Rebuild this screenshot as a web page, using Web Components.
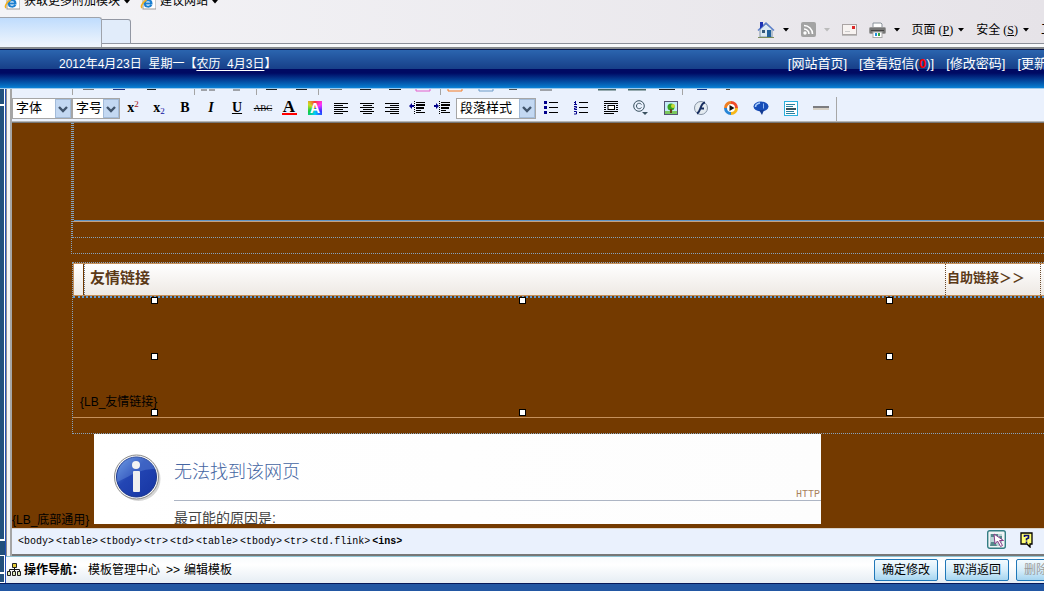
<!DOCTYPE html>
<html lang="zh-CN">
<head>
<meta charset="utf-8">
<title>编辑模板</title>
<style>
  html, body { height: 100%; margin: 0; }
  body { font: 12px/16px "Liberation Sans", "Noto Sans CJK SC", sans-serif; color: #000; overflow: hidden; }
</style>
</head>
<body>
<template-editor-page></template-editor-page>
<script>
const define = (name, html, setup) => customElements.define(name, class extends HTMLElement {
  constructor() {
    super();
    this.attachShadow({ mode: 'open' }).innerHTML =
      '<style>*{box-sizing:border-box}button{font:inherit;color:inherit;cursor:pointer}a{color:inherit;text-decoration:none}</style>' + html;
  }
  connectedCallback() { if (setup) setup(this, this.shadowRoot); }
});

const bars = (rows) => rows.map(([x, y, w]) => `<rect x="${x}" y="${y}" width="${w}" height="1"/>`).join('');
const ICONS = {
  ie: [16, 16, `<rect x="3" y="0" width="13" height="15" fill="#fff" stroke="#999"/><path d="M5 10.500c0 2.500 5 3 6.500.5M4.500 9.500h7c0-4.500-7-4.500-7 0z" fill="none" stroke="#1a7fd0" stroke-width="2"/><path d="M2 14C-1 11 8 3 13 3" fill="none" stroke="#f5b21c" stroke-width="1.500"/>`],
  home: [18, 18, `<path d="M3 8v8h12V8L9 3z" fill="#dde9f2" stroke="#7e94aa"/><path d="M1 9.500L9 2l8 7.500" fill="none" stroke="#5c7fca" stroke-width="1.500"/><path d="M3 1h3v4l-3 3z" fill="#1d32b4"/><rect x="10" y="9" width="4" height="7" fill="#21619c"/><rect x="5" y="9" width="3" height="3" fill="#345a7c"/><path d="M1 16.500h16" stroke="#7b8c5a"/>`],
  rss: [15, 15, `<rect width="15" height="15" rx="2" fill="#a3a3a3"/><circle cx="4" cy="11" r="1.700" fill="#fff"/><path d="M3 7a5 5 0 0 1 5 5M3 3.500A8.500 8.500 0 0 1 11.500 12" fill="none" stroke="#fff" stroke-width="1.600"/>`],
  mail: [15, 12, `<rect x=".5" y=".5" width="14" height="10" fill="#f7f3f1" stroke="#aaa4a4"/><rect x="10" y="2" width="3" height="3" fill="#dc2828"/><path d="M3 7.500h5" stroke="#ccc"/><path d="M0 11.500h15" stroke="#bbb"/>`],
  print: [17, 16, `<path d="M4 6V1h8l1 1v4" fill="#fff" stroke="#8a929a"/><rect x=".5" y="5.500" width="16" height="6" rx="1" fill="#777" stroke="#999"/><path d="M2 8.500h13" stroke="#444"/><rect x="4" y="10" width="9" height="5.500" fill="#fff" stroke="#aaa"/><rect x="6" y="11" width="2" height="3" fill="#1d8edb"/><rect x="9" y="11" width="2" height="3" fill="#36a641"/>`],
  left: [15, 13, `<g>${bars([[0,1,14],[0,3,9],[0,5,14],[0,7,9],[0,9,14],[0,11,9]])}</g>`],
  center: [15, 13, `<g>${bars([[0,1,14],[3,3,9],[0,5,14],[3,7,9],[0,9,14],[3,11,9]])}</g>`],
  right: [15, 13, `<g>${bars([[0,1,14],[5,3,9],[0,5,14],[5,7,9],[0,9,14],[5,11,9]])}</g>`],
  outdent: [17, 14, `<g>${bars([[7,1,9],[7,3,9],[7,4,9],[7,6,8],[7,7,8],[7,9,5],[7,11,9]])}</g><path d="M5.500 0v14" stroke="#000" stroke-dasharray="1 1"/><path d="M0 5l3-3v2h2v2H3v2z" fill="#00008b"/>`],
  indent: [17, 14, `<g>${bars([[7,1,9],[7,3,9],[7,4,9],[7,6,8],[7,7,8],[7,9,5],[7,11,9]])}</g><path d="M5.500 0v14" stroke="#000" stroke-dasharray="1 1"/><path d="M5 5L2 2v2H0v2h2v2z" fill="#00008b"/>`],
  ul: [16, 14, `<path d="M1 0h3v3H1zM1 5h3v3H1zM1 10h3v3H1z" fill="#00008b"/><path d="M6 1.500h9M6 6.500h9M6 11.500h9" stroke="#000"/>`],
  ol: [16, 14, `<path d="M1 1.500h1.500M2.500 0v4M1 3.500h3M1 5.500h2.500v1.500H1.500v1.500H4M1 10.500h2.500V13H1" fill="none" stroke="#00008b"/><path d="M6 1.500h9M6 6.500h9M6 11.500h9" stroke="#000"/>`],
  block: [16, 14, `<path d="M1 .5h14M1 2.500h14M1 4.500h2M1 6.500h2M1 8.500h2M13 4.500h2M13 6.500h2M13 8.500h2M1 10.500h14M1 12.500h10" stroke="#000"/><rect x="5" y="4.500" width="6.500" height="4" fill="#fff" stroke="#000"/>`],
  copy: [18, 16, `<circle cx="7" cy="6" r="5.300" fill="none" stroke="#3a5260"/><path d="M9.500 4.500C8 2.500 4.500 3 4.500 6s3.500 3.500 5 1.500" fill="none" stroke="#3a5260"/><path d="M10 12h6l-3 3z" fill="#3a5260"/>`],
  image: [16, 16, `<rect x="1.500" y="1.500" width="13" height="13" fill="#c4ecf8" stroke="#557"/><path d="M2 11h12v3H2z" fill="#7ac85f"/><circle cx="8" cy="7" r="3.500" fill="#38a320"/><circle cx="10" cy="6" r="2" fill="#c7da39"/><path d="M8 9v4" stroke="#69401c" stroke-width="2"/>`],
  flash: [16, 16, `<circle cx="8" cy="8" r="6.500" fill="#e4ebf1" stroke="#8593a4"/><path d="M12 2.500C7 3 8 12 4 13.500M6.500 8.500H11" fill="none" stroke="#182e60" stroke-width="2"/>`],
  media: [16, 16, `<circle cx="8" cy="8" r="5.500" fill="#fff"/><path d="M8 2.500A5.500 5.500 0 0 1 13.500 8" stroke="#f04a28" fill="none" stroke-width="3"/><path d="M13.500 8A5.500 5.500 0 0 1 8 13.500" stroke="#f7b718" fill="none" stroke-width="3"/><path d="M8 13.500A5.500 5.500 0 0 1 2.500 8" stroke="#2685d7" fill="none" stroke-width="3"/><path d="M2.500 8A5.500 5.500 0 0 1 8 2.500" stroke="#ee7e22" fill="none" stroke-width="3"/><path d="M6.500 5l5 3-5 3z" fill="#111"/>`],
  talk: [18, 16, `<ellipse cx="9" cy="6.500" rx="7.500" ry="5" fill="#174db8"/><path d="M7 10h5l-2 5z" fill="#123a92"/><path d="M3.500 7C3.500 4 6 3.500 8 3" stroke="#a9cdfb" stroke-width="1.600" fill="none"/><path d="M11.500 3.500v5" stroke="#8db6f3"/>`],
  page: [14, 15, `<rect x=".5" y=".5" width="13" height="14" fill="#fff" stroke="#2bb0de"/><path d="M2 3.500h9M2 5.500h7M2 10.500h8M2 12.500h9" stroke="#2b7f9d"/><path d="M2 8h10" stroke="#39525b" stroke-width="2"/>`],
  hr: [16, 14, `<rect y="5" width="16" height="2" fill="#7c7c80"/><rect y="7" width="16" height="2" fill="#d6d0c6"/>`],
  inspect: [19, 19, `<rect x=".7" y=".7" width="17.600" height="17.600" rx="2" fill="#f1f4f5" stroke="#347e84" stroke-width="1.400"/><path d="M3 4h12v12H3z" fill="#bad4d5"/><path d="M4 4h7v3H4zM4 12h4l2 4H3zM12 6h3v6z" fill="#55898b"/><path d="M7 4l1 10 2.500-3 3 5.500 2-1-3-5h4z" fill="#fff" stroke="#8a3c89"/>`],
  help: [14, 16, `<path d="M1 1h11v11h-2v3l-3-3H1z" fill="#ffff75" stroke="#000" stroke-width="1.300"/><path d="M4.500 5V3.500h4V6L6.500 7v1.500M6.500 9.500v1.500" fill="none" stroke="#0a0a78" stroke-width="1.600"/>`],
  sitemap: [15, 14, `<path d="M7.500 4v4M2.500 9V6.500h10V9" fill="none" stroke="#111"/><path d="M5.500.5h4v4h-4z" fill="#e3ca36" stroke="#222"/><path d="M.5 8.500h3v4h-3zM5.500 8.500h3v4h-3zM10.500 8.500h3v4h-3z" fill="#dce6b8" stroke="#222"/>`],
  info: [50, 52, `<defs><linearGradient id="g" x1="0" y1="0" x2="1" y2="1"><stop offset="0" stop-color="#6a98e2"/><stop offset=".4" stop-color="#2346b4"/><stop offset="1" stop-color="#1634a2"/></linearGradient></defs><circle cx="24.500" cy="25" r="22" fill="#777" opacity=".3"/><circle cx="22.500" cy="23" r="22" fill="#f6f6f6" stroke="#8a8a8a"/><circle cx="22.500" cy="23" r="20" fill="url(#g)" stroke="#1b378f"/><path d="M3 28C14 24 22 15 42 15a22 20 0 0 0-20-12C8 3 2 16 3 28z" fill="#7fa8ea" opacity=".3"/><circle cx="22" cy="11" r="4" fill="#f3f3f3"/><rect x="19" y="17" width="7" height="21" rx="1" fill="#efefef"/>`],
  chevron: [16, 19, `<rect x="0" y="0" width="16" height="19" rx="1" fill="#c3d8f2"/><rect x=".5" y=".5" width="15" height="18" fill="none" stroke="#a3bbd9"/><path d="M4 8l4 4 4-4" fill="none" stroke="#41546c" stroke-width="2.400"/>`],
  down: [6, 4, `<path d="M0 0h6L3 3.500z"/>`],
  cropped: [800, 6, `<path d="M60.500 0v6M182.500 0v6M244.500 0v6M306.500 0v6M428.500 0v6M670.500 0v6" stroke="#a4a4a4"/><g fill="none" stroke-width="1"><path d="M71 .5h11M318 .5h12" stroke="#777"/><path d="M101 .5h12" stroke="#223180"/><path d="M135 .5h9M254 .5h11M284 .5h11M348 .5h11M377 .5h12M647 .5h16" stroke="#222"/><path d="M189 1h6M197 1h6M221 1h7M497 .5h8M528 1h12" stroke="#555"/><path d="M404 0v2h14V0" stroke="#e45ecb"/><path d="M436 0v2h14V0" stroke="#f47b25"/><path d="M467 0v2h14V0" stroke="#6c9bc8"/><path d="M586 .5h18M616 .5h18" stroke="#466" stroke-width="2"/><path d="M685 .5h10" stroke="#113085"/><path d="M714 .5h4" stroke="#543"/></g>`]
};
define('ui-icon', `<style>:host{display:inline-block;flex:none;line-height:0}svg{display:block}</style><span></span>`, (el, root) => {
  const [w, h, body] = ICONS[el.getAttribute('name')];
  root.querySelector('span').innerHTML = `<svg width="${w}" height="${h}" viewBox="0 0 ${w} ${h}" aria-hidden="true">${body}</svg>`;
});

define('browser-bar', `<style>
  :host{display:block;height:49px;overflow:hidden;border-bottom:2px solid #85898c;background:linear-gradient(90deg,#f4f4f7,#e6e3e8)}
  .fav{display:flex;height:17px;padding-left:4px;gap:4px;overflow:hidden}
  .fav a{display:flex;gap:4px;margin-right:6px;align-items:flex-start;height:17px;white-space:nowrap;margin-top:-7px}
  .fav a ui-icon{margin-top:1px}.fav a .arrow{margin:7px 0 0}
  .row{display:flex;height:27px;border-bottom:1px solid #8b8f98}
  .tab{width:102px;border:1px solid #9fa3ab;border-left:0;border-bottom:0;border-radius:0 3px 0 0;background:linear-gradient(#bfdcfd,#f1f6fc);height:30px;padding:0}
  .new{width:29px;margin-top:2px;border:1px solid #9297a3;border-left:0;border-radius:0 3px 0 0;background:#e1ecfa;height:25px;padding:0}
  nav{display:flex;margin:0 -9px 0 auto;align-items:center;height:25px;white-space:nowrap}
  nav button{display:flex;align-items:center;background:none;border:0;padding:0;gap:8px;margin-right:12px}
  nav .text{gap:5px}nav .last{margin:0}.off{fill:#bbb}
  .m{font-family:"Liberation Serif","Noto Sans CJK SC",serif}
  .base{height:3px;background:#f7f9fb}
  </style>
  <div class="fav"><a href="#"><ui-icon name="ie"></ui-icon><span>获取更多附加模块</span><ui-icon class="arrow" name="down"></ui-icon></a><a href="#"><ui-icon name="ie"></ui-icon><span>建议网站</span><ui-icon class="arrow" name="down"></ui-icon></a></div>
  <div class="row"><button class="tab" aria-label="当前标签"></button><button class="new" aria-label="新标签"></button>
  <nav>
    <button aria-label="主页"><ui-icon name="home"></ui-icon><ui-icon name="down"></ui-icon></button>
    <button class="off" aria-label="源"><ui-icon name="rss"></ui-icon><ui-icon name="down"></ui-icon></button>
    <button aria-label="邮件"><ui-icon name="mail"></ui-icon></button>
    <button aria-label="打印"><ui-icon name="print"></ui-icon><ui-icon name="down"></ui-icon></button>
    <button class="text"><span>页面<span class="m"> (<u>P</u>)</span></span><ui-icon name="down"></ui-icon></button>
    <button class="text"><span>安全<span class="m"> (<u>S</u>)</span></span><ui-icon name="down"></ui-icon></button>
    <button class="last">工</button>
  </nav></div><div class="base"></div>`);

define('site-banner', `<style>
  :host{display:flex;justify-content:space-between;height:40px;color:#fff;white-space:nowrap;overflow:hidden;padding:6px 0 0 59px;border-top:1px solid #06154b;border-bottom:1px solid #9cc9ea;background:linear-gradient(#2b65af 0,#173f88 19px,#000a63 19px,#000a63 23px,#0570c4 36px,#0b82d8 38px)}
  u{text-underline-offset:2px}
  nav{display:flex;gap:12px;font-size:13px;margin-right:-3px}b{color:#f00}
  </style><div>2012年4月23日&nbsp; 星期一【<u>农历&nbsp; 4月3日</u>】</div>
  <nav><a href="#">[网站首页]</a><a href="#">[查看短信(<b>0</b>)]</a><a href="#">[修改密码]</a><a href="#">[更新</a></nav>`);

define('side-strip', `<style>
  :host{display:flex;flex-direction:column;width:6px;background:#fff;border-right:1px solid #2450b8;gap:1px}
  i{display:block;background:#22507c;border:solid #fff;border-width:0 1px 1px 0}
  .a{height:16px}.b{flex:1}.c{height:14px;border-color:#22507c}.d{height:17px}.e{height:9px}
  </style><i class="a"></i><i class="b"></i><i class="c"></i><i class="d"></i><i class="e"></i>`);

define('tool-select', `<style>
  :host{display:grid;height:21px;border:1px solid #a6a6a6;background:#fff;font-size:13px}
  select{grid-area:1/1;appearance:none;border:0;background:none;font:inherit;color:#000;padding:0 16px 0 3px;width:100%;outline:0;height:19px}
  ui-icon{grid-area:1/1;justify-self:end;pointer-events:none}
  </style><select><option></option></select><ui-icon name="chevron"></ui-icon>`, (el, root) => {
  root.querySelector('option').textContent = el.getAttribute('value');
  root.querySelector('select').setAttribute('aria-label', el.getAttribute('value'));
});

define('tool-button', `<style>
  :host{display:block;width:26px}:host([wide]){width:30px}:host([tight]){width:25px}
  button{display:flex;align-items:center;justify-content:center;width:100%;height:22px;border:0;background:none;padding:0;font:bold 14px/16px "Liberation Serif",serif}
  </style><button><slot></slot></button>`, (el, root) => {
  root.querySelector('button').setAttribute('aria-label', el.getAttribute('label'));
});

define('editor-toolbar', `<style>
  :host{display:block;flex:none;background:#eaf1fd;height:34px;overflow:hidden;border-bottom:1px solid #777;box-shadow:inset 0 -1px #b5b5b5}
  .tools{display:flex;align-items:center;height:26px;white-space:nowrap}
  ui-icon{display:block}
  .x{align-self:flex-end;font-size:9px;line-height:10px;font-weight:400}
  .red{color:#9c1010;padding-bottom:10px}.blue{color:#1010a0;padding-bottom:3px}
  .abc{font-size:9px;font-weight:400;text-decoration:line-through}
  .fg{border-bottom:2px solid #f00;line-height:12px;width:15px;text-align:center;font-size:17px}
  .bg{width:14px;height:14px;line-height:14px;color:#fff;background:conic-gradient(#f33,#f3f,#33f,#0cf,#1c4,#cd2,#f33);font-family:"Liberation Sans",sans-serif}
  .sep{width:1px;height:24px;background:#a7a7a7;align-self:flex-end}
  </style><ui-icon name="cropped"></ui-icon>
  <div class="tools"><tool-select value="字体" style="width:60px"></tool-select><tool-select value="字号" style="width:48px"></tool-select>
  <tool-button label="上标">x<span class="x red">2</span></tool-button><tool-button label="下标">x<span class="x blue">2</span></tool-button>
  <tool-button label="粗体">B</tool-button><tool-button label="斜体"><i>I</i></tool-button><tool-button label="下划线"><u>U</u></tool-button><tool-button label="删除线"><span class="abc">ABC</span></tool-button>
  <tool-button label="文字颜色"><span class="fg">A</span></tool-button><tool-button label="背景颜色"><span class="bg">A</span></tool-button>
  <tool-button label="左对齐"><ui-icon name="left"></ui-icon></tool-button><tool-button label="居中"><ui-icon name="center"></ui-icon></tool-button>
  <tool-button tight label="右对齐"><ui-icon name="right"></ui-icon></tool-button><tool-button tight label="减少缩进"><ui-icon name="outdent"></ui-icon></tool-button><tool-button tight label="增加缩进"><ui-icon name="indent"></ui-icon></tool-button>
  <tool-select value="段落样式" style="width:80px;margin-left:1px"></tool-select>
  <tool-button wide label="项目列表"><ui-icon name="ul"></ui-icon></tool-button><tool-button wide label="编号列表"><ui-icon name="ol"></ui-icon></tool-button><tool-button wide label="块"><ui-icon name="block"></ui-icon></tool-button><tool-button wide label="符号"><ui-icon name="copy"></ui-icon></tool-button><tool-button wide label="图片"><ui-icon name="image"></ui-icon></tool-button><tool-button wide label="动画"><ui-icon name="flash"></ui-icon></tool-button><tool-button wide label="媒体"><ui-icon name="media"></ui-icon></tool-button><tool-button wide label="批注"><ui-icon name="talk"></ui-icon></tool-button><tool-button wide label="页面"><ui-icon name="page"></ui-icon></tool-button><tool-button wide label="分隔线"><ui-icon name="hr"></ui-icon></tool-button><span class="sep"></span></div>`);

define('selection-frame', `<style>
  :host{display:block;position:absolute;left:78px;right:151px;top:-1px;bottom:1px;pointer-events:none}
  .g{height:100%;display:grid;grid-template-columns:7px 1fr 7px 1fr 7px;grid-template-rows:7px 1fr 7px 1fr 7px}
  i{background:#fff;border:1px solid #000}
  </style><div class="g"><i style="grid-area:1/1"></i><i style="grid-area:1/3"></i><i style="grid-area:1/5"></i><i style="grid-area:3/1"></i><i style="grid-area:3/5"></i><i style="grid-area:5/1"></i><i style="grid-area:5/3"></i><i style="grid-area:5/5"></i></div>`);

define('link-panel', `<style>
  :host{display:block;margin:8px 0 0 60px;border:1px dotted #86a3bd;border-right:0;color:#5b3917;font-weight:700}
  header{display:flex;height:33px;border:solid #c5905c;border-width:1px 0 1px 1px;background:linear-gradient(#fff,#eee9e4)}
  header>*{height:31px;line-height:28px;white-space:nowrap}
  .lead{width:10px;border-right:1px solid #743a00}
  h2{flex:1;margin:0;font-size:15px;padding-left:5px;border-left:1px dotted #6b7686}
  a{width:95px;font-size:13px;padding-left:1px;border-left:1px dotted #6b4a2c}
  .end{width:4px;border-left:1px dotted #6b4a2c}
  .body{position:relative;border-top:2px dotted #5f9bd4;border-bottom:1px solid #c5905c;height:122px;display:flex;align-items:flex-end;padding:0 0 7px 7px;color:#000;font-weight:400}
  .foot{height:15px}
  </style><header><span class="lead"></span><h2>友情链接</h2><a href="#">自助链接＞＞</a><span class="end"></span></header>
  <div class="body"><span>{LB_友情链接}</span><selection-frame></selection-frame></div><div class="foot"></div>`);

define('error-frame', `<style>
  :host{display:flex;gap:10px;width:727px;height:90px;overflow:hidden;background:linear-gradient(90deg,#fff,#fdfdfd);padding:20px 0 0 20px}
  section{flex:1;min-width:0}
  .head{display:flex;justify-content:space-between;align-items:flex-end;height:47px;border-bottom:1px solid #adb5c4}
  h1{margin:0 0 18px;font-size:18px;line-height:20px;font-weight:300;color:#4465a2}
  .code{font:10px/10px "Liberation Mono",monospace;color:#a8825c;padding-right:1px}
  p{margin:7px 0 0;font-size:14px;line-height:20px;color:#444}
  </style><ui-icon name="info"></ui-icon><section><div class="head"><h1>无法找到该网页</h1><span class="code">HTTP</span></div><p>最可能的原因是:</p></section>`);

define('edit-canvas', `<style>
  :host{display:block;flex:1;min-height:0;overflow:hidden;background:#743a00}
  .outer,.mid{border:dotted #86a3bd;border-width:0 0 1px 1px;padding-bottom:15px}
  .outer{margin-left:59px}
  .cell{height:99px;border-left:1px dotted #86a3bd;border-bottom:1px solid #c5a080;box-shadow:inset 0 -1px #5f93c4}
  .footer{display:flex;align-items:flex-end;gap:4px;white-space:nowrap}
  .label{width:78px;line-height:8px}
  </style><div class="outer"><div class="mid"><div class="cell"></div></div></div>
  <link-panel></link-panel><div class="footer"><span class="label">{LB_底部通用}</span><error-frame></error-frame></div>`);

define('status-path', `<style>
  :host{display:flex;flex:none;align-items:center;justify-content:space-between;height:28px;padding:0 10px 0 6px;background:#eaf1fd;border-top:1px solid #d9d3cc;border-bottom:2px solid #777}
  nav{display:flex;gap:2px;font:10px/14px "Liberation Mono",monospace}
  .last{font-weight:700}
  .side{display:flex;gap:14px;align-items:center}button{border:0;background:none;padding:0;display:block}
  </style><nav></nav><div class="side"><button aria-label="选择元素"><ui-icon name="inspect"></ui-icon></button><button aria-label="帮助"><ui-icon name="help"></ui-icon></button></div>`, (el, root) => {
  const tags = ['body', 'table', 'tbody', 'tr', 'td', 'table', 'tbody', 'tr', 'td.flink', 'ins'];
  root.querySelector('nav').replaceChildren(...tags.map((t, i) => {
    const a = document.createElement('a');
    a.href = '#'; a.textContent = `<${t}>`;
    if (i === tags.length - 1) a.className = 'last';
    return a;
  }));
});

define('action-bar', `<style>
  :host{display:flex;flex:none;align-items:center;height:27px;padding-left:1px;border-top:1px solid #8fc3d4;background:linear-gradient(#f8fbfd,#fff 30%,#e5edf4);white-space:nowrap}
  .crumb{display:flex;align-items:center;margin-left:2px}.crumb a{margin-left:4px}.crumb span{margin:0 0 0 6px}
  .actions{display:flex;gap:7px;margin:0 -36px 0 auto}
  button{width:64px;height:22px;padding:0;border:1px solid #1f77b8;border-radius:2px;background:linear-gradient(#f3fafe,#d6edfa 50%,#a6d5f0)}
  button[disabled]{color:#9b9b9b;text-align:left;padding-left:7px}
  </style><ui-icon name="sitemap"></ui-icon><div class="crumb"><b>操作导航：</b><a href="#">模板管理中心</a><span>&gt;&gt;</span><a href="#">编辑模板</a></div>
  <div class="actions"><button>确定修改</button><button>取消返回</button><button disabled>删除</button></div>`);

define('template-editor-page', `<style>
  :host{display:flex;flex-direction:column;height:100vh;overflow:hidden}
  browser-bar,site-banner{flex:none}
  main{display:flex;flex:1;min-height:0}
  .work{display:flex;flex-direction:column;flex:1;min-width:0}
  .editor{display:flex;flex-direction:column;flex:1;min-height:0;border-left:1px solid #8c8c8c;background:#f4f4f4;padding-left:3px}
  .inner{display:flex;flex-direction:column;flex:1;min-height:0;border-left:2px solid #a5a5a5}
  footer{height:8px;flex:none;background:#2257a3;border-top:1px solid #05195a}
  </style><browser-bar></browser-bar><site-banner></site-banner>
  <main><side-strip></side-strip><div class="work"><div class="editor"><div class="inner"><editor-toolbar></editor-toolbar><edit-canvas></edit-canvas><status-path></status-path></div></div><action-bar></action-bar></div></main><footer></footer>`);
</script>
</body>
</html>
